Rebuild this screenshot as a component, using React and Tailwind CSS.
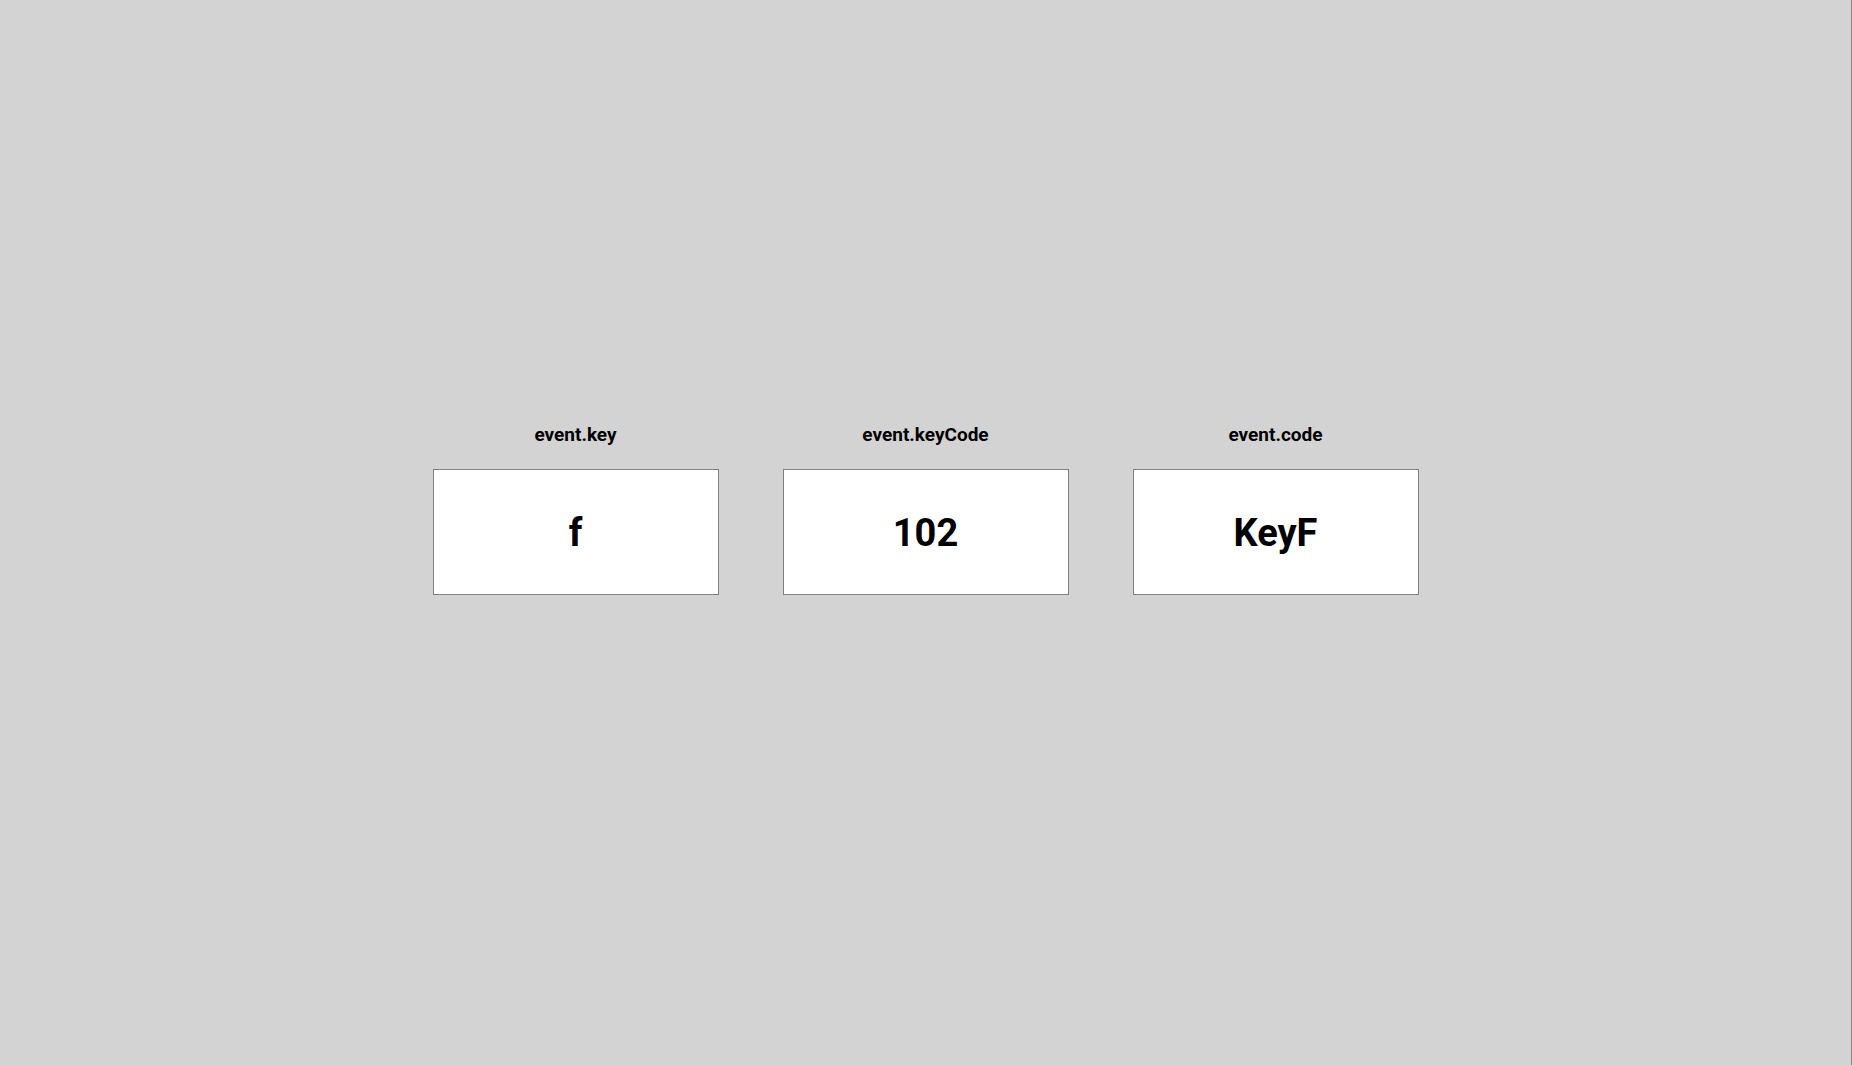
import React, { useState, useEffect } from 'react';

const KeyInfo = () => {
  const [info, setInfo] = useState({ key: 'f', keyCode: 102, code: 'KeyF' });

  useEffect(() => {
    const onKey = (e) => setInfo({ key: e.key, keyCode: e.keyCode, code: e.code });
    window.addEventListener('keydown', onKey);
    return () => window.removeEventListener('keydown', onKey);
  }, []);

  const cards = [
    { label: 'event.key', value: info.key },
    { label: 'event.keyCode', value: info.keyCode },
    { label: 'event.code', value: info.code },
  ];

  return (
    <div className="flex justify-center gap-16">
      {cards.map((card) => (
        <div key={card.label} className="flex flex-col items-center">
          <p className="text-[19px] leading-[22px] font-bold text-black mb-[23px]">{card.label}</p>
          <div className="w-[286px] h-[126px] bg-white border border-[#808080] flex items-center justify-center">
            <span className="text-[38px] leading-none font-bold text-black translate-y-[1px]">{card.value}</span>
          </div>
        </div>
      ))}
    </div>
  );
};

export default function App() {
  return (
    <div
      className="h-[1065px] w-full bg-[#d3d3d3] pt-[424px] border-r border-[#8a8a8a] overflow-hidden"
      style={{ fontFamily: 'Roboto, "Liberation Sans", sans-serif' }}
    >
      <KeyInfo />
    </div>
  );
}
